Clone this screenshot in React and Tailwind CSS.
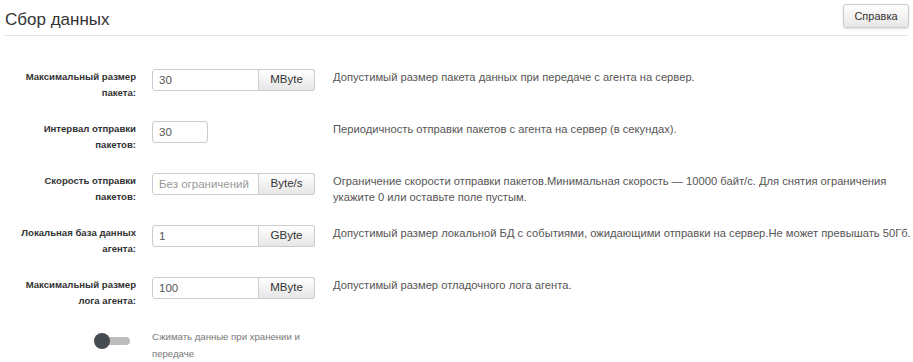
import React from "react";

const rows = [
  {
    label: ["Максимальный размер", "пакета:"],
    value: "30",
    unit: "MByte",
    hint: ["Допустимый размер пакета данных при передаче с агента на сервер."],
  },
  {
    label: ["Интервал отправки", "пакетов:"],
    value: "30",
    short: true,
    hint: ["Периодичность отправки пакетов с агента на сервер (в секундах)."],
  },
  {
    label: ["Скорость отправки", "пакетов:"],
    value: "",
    placeholder: "Без ограничений",
    unit: "Byte/s",
    hint: [
      "Ограничение скорости отправки пакетов.Минимальная скорость — 10000 байт/с. Для снятия ограничения",
      "укажите 0 или оставьте поле пустым.",
    ],
  },
  {
    label: ["Локальная база данных", "агента:"],
    value: "1",
    unit: "GByte",
    hint: ["Допустимый размер локальной БД с событиями, ожидающими отправки на сервер.Не может превышать 50Гб."],
  },
  {
    label: ["Максимальный размер", "лога агента:"],
    value: "100",
    unit: "MByte",
    hint: ["Допустимый размер отладочного лога агента."],
  },
];

const FieldRow = ({ row }) => (
  <div className="flex items-start mb-[20px]">
    <div className="w-[136px] text-right text-[9.6px] font-bold leading-[16px] text-[#333]">
      {row.label.map((l) => (
        <div key={l}>{l}</div>
      ))}
    </div>
    <div className="ml-[16px] w-[163px] flex shrink-0">
      <input
        readOnly
        value={row.value}
        placeholder={row.placeholder}
        className={`${row.short ? "w-[56px]" : "w-[107px]"} h-[22px] border border-[#ccc] ${
          row.unit ? "rounded-l-[3px]" : "rounded-[3px]"
        } px-[6px] text-[11.5px] text-[#555] placeholder:text-[#999] bg-white outline-none`}
      />
      {row.unit && (
        <div className="w-[56px] h-[22px] border border-l-0 border-[#ccc] rounded-r-[3px] bg-gradient-to-b from-white to-[#e6e6e6] flex items-center justify-center text-[11.5px] text-[#333]">
          {row.unit}
        </div>
      )}
    </div>
    <div className="ml-[18px] text-[11.2px] leading-[16px] text-[#555]">
      {row.hint.map((h) => (
        <div key={h}>{h}</div>
      ))}
    </div>
  </div>
);

export default function App() {
  return (
    <div className="w-[913px] h-[362px] bg-white overflow-hidden font-['Liberation_Sans',Arial,sans-serif]">
      <div className="mx-[5px] flex items-center justify-between h-[36px] border-b border-[#e5e5e5]">
        <h2 className="text-[17px] text-[#333] pt-[4px]">Сбор данных</h2>
        <button className="h-[24px] w-[66px] mr-[-1px] mb-[3px] border border-[#ccc] rounded-[3px] bg-gradient-to-b from-white to-[#e6e6e6] text-[11px] text-[#333] shadow-sm">
          Справка
        </button>
      </div>

      <div className="pt-[33px]">
        {rows.map((row) => (
          <FieldRow key={row.label.join(" ")} row={row} />
        ))}

        <div className="flex items-start -mt-[1px]">
          <div className="w-[136px] flex justify-end pr-[8px] pt-[5px]">
            <div className="relative w-[36px] h-[16px] translate-x-[2px]">
              <div className="absolute left-[6px] right-0 top-[4px] h-[8px] rounded-full bg-[#bdbdbd]" />
              <div className="absolute left-0 top-0 w-[16px] h-[16px] rounded-full bg-[#454b50]" />
            </div>
          </div>
          <div className="ml-[16px] w-[160px] text-[9.6px] leading-[17px] text-[#777]">
            Сжимать данные при хранении и передаче
          </div>
        </div>
      </div>
    </div>
  );
}
